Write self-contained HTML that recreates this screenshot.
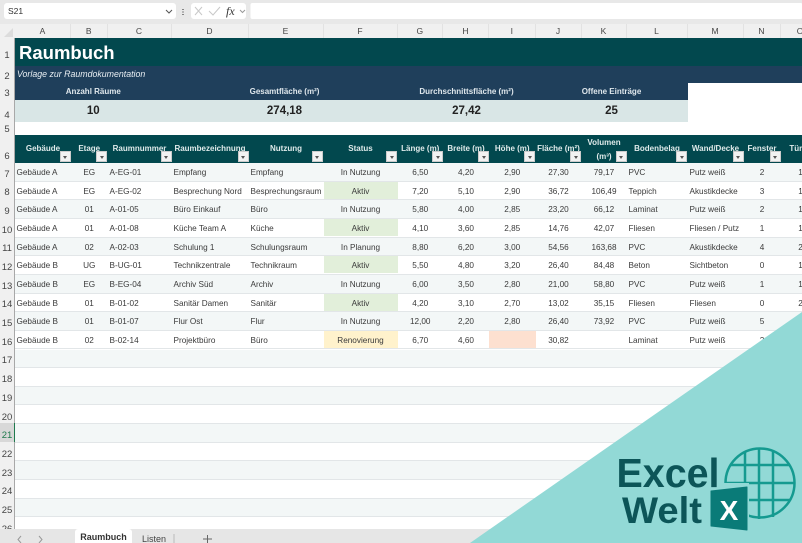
<!DOCTYPE html>
<html lang="de"><head><meta charset="utf-8"><title>Raumbuch</title>
<style>
*{box-sizing:border-box}
html,body{margin:0;padding:0;background:#fff}
#p{position:relative;width:802px;height:543px;overflow:hidden;background:#fff;font-family:"Liberation Sans",sans-serif;color:#333;filter:blur(.3px)}
.a{position:absolute}
.cl{position:absolute;top:24px;height:14px;line-height:15px;text-align:center;font-size:8.5px;color:#444;border-right:1px solid #e2e2e2}
.rn{position:absolute;left:0;width:14px;text-align:center;font-size:9.5px;color:#444;line-height:12px}
.r{position:absolute;left:15px;width:800px;height:18.65px;display:grid;grid-template-columns:56px 36.5px 64px 77px 75px 74px 45.5px 46px 46.5px 46px 45px 61px 56px 37px 40px;font-size:8.2px;line-height:19px;border-bottom:1.5px solid #e2e6e8;color:#3a3a3a;white-space:nowrap}
.r.o{background:#f3f7f7}
.r>div{overflow:visible;height:17.2px}
.l{padding-left:2px}.c{text-align:center}
.r>div:first-child{padding-left:1.5px}
.g{background:#e2efda}.y{background:#fff2cc}.p{background:#fde0d0}
.h{position:absolute;top:135px;height:28px;color:#dfeaea;font-size:8px;font-weight:bold;text-align:center;line-height:28px;white-space:nowrap}
.f{position:absolute;top:151px;width:11px;height:11px;background:#f2f2f2;border:1px solid #ccc}
.f:after{content:"";position:absolute;left:2.5px;top:3.5px;border:2.5px solid transparent;border-top:3px solid #555;border-bottom:0}
.k{position:absolute;top:83px;height:17px;line-height:18px;text-align:center;color:#dfe7ec;font-size:8px;font-weight:bold}
.v{position:absolute;top:100px;height:22px;line-height:23px;text-align:center;color:#222;font-size:11.5px;font-weight:bold}
</style></head><body><div id="p">

<!-- formula bar -->
<div class="a" style="left:0;top:0;width:802px;height:24px;background:#e8e8e8"></div>
<div class="a" style="left:4px;top:3px;width:172px;height:16px;background:#fff;border-radius:3px;font-size:8.5px;line-height:16px;padding-left:4px;color:#333">S21</div>
<svg class="a" style="left:0;top:0" width="802" height="24" fill="none">
<path d="M166 10l3 3 3-3" stroke="#555" stroke-width="1"/>
<path d="M183 9v1M183 11.500v1M183 14v1" stroke="#444" stroke-width="1.200"/>
<rect x="191" y="3" width="55" height="16" rx="3" fill="#fff"/>
<path d="M195 7l7 8M202 7l-7 8" stroke="#c8c8c8"/>
<path d="M209 11l4 4 7-8" stroke="#c8c8c8"/>
<path d="M240 10l2.500 2.500 2.500-2.500" stroke="#999"/>
<rect x="250.500" y="3" width="552" height="16" rx="2" fill="#fff"/>
</svg>
<div class="a" style="left:226px;top:3px;height:16px;line-height:16px;font-family:'Liberation Serif',serif;font-style:italic;font-size:12px;color:#333">fx</div>

<!-- column header -->
<div class="a" style="left:0;top:24px;width:802px;height:14px;background:#f0f0f0"></div>
<svg class="a" style="left:0;top:24px" width="15" height="14"><path d="M4 13h9V4z" fill="#dcdcdc"/></svg>
<div class="cl" style="left:15px;width:56px">A</div>
<div class="cl" style="left:71px;width:36.500px">B</div>
<div class="cl" style="left:107.500px;width:64px">C</div>
<div class="cl" style="left:171.500px;width:77px">D</div>
<div class="cl" style="left:248.500px;width:75px">E</div>
<div class="cl" style="left:323.500px;width:74px">F</div>
<div class="cl" style="left:397.500px;width:45.500px">G</div>
<div class="cl" style="left:443px;width:46px">H</div>
<div class="cl" style="left:489px;width:46.500px">I</div>
<div class="cl" style="left:535.500px;width:46px">J</div>
<div class="cl" style="left:581.500px;width:45px">K</div>
<div class="cl" style="left:626.500px;width:61px">L</div>
<div class="cl" style="left:687.500px;width:56px">M</div>
<div class="cl" style="left:743.500px;width:37px">N</div>
<div class="cl" style="left:780.500px;width:40px">O</div>

<!-- row header -->
<div class="a" style="left:0;top:38px;width:15px;height:491px;background:#f0f0f0;border-right:1px solid #a8a8a8"></div>
<div class="a" style="left:0;top:423px;width:14px;height:19px;background:#d8d8d8"></div>
<div class="a" style="left:13.500px;top:423px;width:1.500px;height:19px;background:#1f7a4d"></div>
<div class="rn" style="top:50px">1</div>
<div class="rn" style="top:71px">2</div>
<div class="rn" style="top:88px">3</div>
<div class="rn" style="top:110px">4</div>
<div class="rn" style="top:124px">5</div>
<div class="rn" style="top:151px">6</div>
<div class="rn" style="top:169px">7</div>
<div class="rn" style="top:187px">8</div>
<div class="rn" style="top:206px">9</div>
<div class="rn" style="top:225px">10</div>
<div class="rn" style="top:243px">11</div>
<div class="rn" style="top:262px">12</div>
<div class="rn" style="top:281px">13</div>
<div class="rn" style="top:299px">14</div>
<div class="rn" style="top:318px">15</div>
<div class="rn" style="top:337px">16</div>
<div class="rn" style="top:355px">17</div>
<div class="rn" style="top:374px">18</div>
<div class="rn" style="top:393px">19</div>
<div class="rn" style="top:412px">20</div>
<div class="rn" style="top:430px;color:#1f7a4d">21</div>
<div class="rn" style="top:449px">22</div>
<div class="rn" style="top:468px">23</div>
<div class="rn" style="top:486px">24</div>
<div class="rn" style="top:505px">25</div>
<div class="rn" style="top:524px">26</div>

<!-- title bands -->
<div class="a" style="left:15px;top:38px;width:787px;height:28px;background:#02484e;color:#fff;font-size:18.500px;font-weight:bold;line-height:29px;padding-left:4px">Raumbuch</div>
<div class="a" style="left:15px;top:66px;width:787px;height:17px;background:#1f3f5b;color:#e8eef2;font-size:8.800px;font-style:italic;line-height:16px;padding-left:2px">Vorlage zur Raumdokumentation</div>
<div class="a" style="left:15px;top:83px;width:672.500px;height:17px;background:#1f3f5b"></div>
<div class="a" style="left:15px;top:100px;width:672.500px;height:22px;background:#d9e6e6"></div>
<div class="a" style="left:15px;top:134.500px;width:787px;height:1px;background:#777"></div>
<div class="k" style="left:15px;width:156.500px">Anzahl Räume</div>
<div class="k" style="left:171.500px;width:226px">Gesamtfläche (m²)</div>
<div class="k" style="left:397.500px;width:138px">Durchschnittsfläche (m²)</div>
<div class="k" style="left:535.500px;width:152px">Offene Einträge</div>
<div class="v" style="left:15px;width:156.500px">10</div>
<div class="v" style="left:171.500px;width:226px">274,18</div>
<div class="v" style="left:397.500px;width:138px">27,42</div>
<div class="v" style="left:535.500px;width:152px">25</div>

<!-- table header -->
<div class="a" style="left:15px;top:135px;width:787px;height:28px;background:#02484e"></div>
<div class="h" style="left:15px;width:56px">Gebäude</div>
<div class="h" style="left:71px;width:36.500px">Etage</div>
<div class="h" style="left:107.500px;width:64px">Raumnummer</div>
<div class="h" style="left:171.500px;width:77px">Raumbezeichnung</div>
<div class="h" style="left:248.500px;width:75px">Nutzung</div>
<div class="h" style="left:323.500px;width:74px">Status</div>
<div class="h" style="left:397.500px;width:45.500px">Länge (m)</div>
<div class="h" style="left:443px;width:46px">Breite (m)</div>
<div class="h" style="left:489px;width:46.500px">Höhe (m)</div>
<div class="h" style="left:535.500px;width:46px">Fläche (m²)</div>
<div class="h" style="left:581.500px;width:45px;line-height:14px;padding-top:1px;white-space:normal">Volumen (m³)</div>
<div class="h" style="left:626.500px;width:61px">Bodenbelag</div>
<div class="h" style="left:687.500px;width:56px">Wand/Decke</div>
<div class="h" style="left:743.500px;width:37px">Fenster</div>
<div class="h" style="left:780.500px;width:40px">Türen</div>
<div class="f" style="left:59.500px"></div>
<div class="f" style="left:96px"></div>
<div class="f" style="left:160.500px"></div>
<div class="f" style="left:237.500px"></div>
<div class="f" style="left:311.500px"></div>
<div class="f" style="left:386px"></div>
<div class="f" style="left:432px"></div>
<div class="f" style="left:478px"></div>
<div class="f" style="left:524px"></div>
<div class="f" style="left:570px"></div>
<div class="f" style="left:615.500px"></div>
<div class="f" style="left:676px"></div>
<div class="f" style="left:732.500px"></div>
<div class="f" style="left:769.500px"></div>

<!-- data -->
<div class="r o" style="top:163px"><div class="l">Gebäude A</div><div class="c">EG</div><div class="l">A-EG-01</div><div class="l">Empfang</div><div class="l">Empfang</div><div class="c">In Nutzung</div><div class="c">6,50</div><div class="c">4,20</div><div class="c">2,90</div><div class="c">27,30</div><div class="c">79,17</div><div class="l">PVC</div><div class="l">Putz weiß</div><div class="c">2</div><div class="c">1</div></div>
<div class="r" style="top:181.650px"><div class="l">Gebäude A</div><div class="c">EG</div><div class="l">A-EG-02</div><div class="l">Besprechung Nord</div><div class="l">Besprechungsraum</div><div class="c g">Aktiv</div><div class="c">7,20</div><div class="c">5,10</div><div class="c">2,90</div><div class="c">36,72</div><div class="c">106,49</div><div class="l">Teppich</div><div class="l">Akustikdecke</div><div class="c">3</div><div class="c">1</div></div>
<div class="r o" style="top:200.300px"><div class="l">Gebäude A</div><div class="c">01</div><div class="l">A-01-05</div><div class="l">Büro Einkauf</div><div class="l">Büro</div><div class="c">In Nutzung</div><div class="c">5,80</div><div class="c">4,00</div><div class="c">2,85</div><div class="c">23,20</div><div class="c">66,12</div><div class="l">Laminat</div><div class="l">Putz weiß</div><div class="c">2</div><div class="c">1</div></div>
<div class="r" style="top:218.950px"><div class="l">Gebäude A</div><div class="c">01</div><div class="l">A-01-08</div><div class="l">Küche Team A</div><div class="l">Küche</div><div class="c g">Aktiv</div><div class="c">4,10</div><div class="c">3,60</div><div class="c">2,85</div><div class="c">14,76</div><div class="c">42,07</div><div class="l">Fliesen</div><div class="l">Fliesen / Putz</div><div class="c">1</div><div class="c">1</div></div>
<div class="r o" style="top:237.600px"><div class="l">Gebäude A</div><div class="c">02</div><div class="l">A-02-03</div><div class="l">Schulung 1</div><div class="l">Schulungsraum</div><div class="c">In Planung</div><div class="c">8,80</div><div class="c">6,20</div><div class="c">3,00</div><div class="c">54,56</div><div class="c">163,68</div><div class="l">PVC</div><div class="l">Akustikdecke</div><div class="c">4</div><div class="c">2</div></div>
<div class="r" style="top:256.250px"><div class="l">Gebäude B</div><div class="c">UG</div><div class="l">B-UG-01</div><div class="l">Technikzentrale</div><div class="l">Technikraum</div><div class="c g">Aktiv</div><div class="c">5,50</div><div class="c">4,80</div><div class="c">3,20</div><div class="c">26,40</div><div class="c">84,48</div><div class="l">Beton</div><div class="l">Sichtbeton</div><div class="c">0</div><div class="c">1</div></div>
<div class="r o" style="top:274.900px"><div class="l">Gebäude B</div><div class="c">EG</div><div class="l">B-EG-04</div><div class="l">Archiv Süd</div><div class="l">Archiv</div><div class="c">In Nutzung</div><div class="c">6,00</div><div class="c">3,50</div><div class="c">2,80</div><div class="c">21,00</div><div class="c">58,80</div><div class="l">PVC</div><div class="l">Putz weiß</div><div class="c">1</div><div class="c">1</div></div>
<div class="r" style="top:293.550px"><div class="l">Gebäude B</div><div class="c">01</div><div class="l">B-01-02</div><div class="l">Sanitär Damen</div><div class="l">Sanitär</div><div class="c g">Aktiv</div><div class="c">4,20</div><div class="c">3,10</div><div class="c">2,70</div><div class="c">13,02</div><div class="c">35,15</div><div class="l">Fliesen</div><div class="l">Fliesen</div><div class="c">0</div><div class="c">2</div></div>
<div class="r o" style="top:312.200px"><div class="l">Gebäude B</div><div class="c">01</div><div class="l">B-01-07</div><div class="l">Flur Ost</div><div class="l">Flur</div><div class="c">In Nutzung</div><div class="c">12,00</div><div class="c">2,20</div><div class="c">2,80</div><div class="c">26,40</div><div class="c">73,92</div><div class="l">PVC</div><div class="l">Putz weiß</div><div class="c">5</div><div class="c">1</div></div>
<div class="r" style="top:330.850px"><div class="l">Gebäude B</div><div class="c">02</div><div class="l">B-02-14</div><div class="l">Projektbüro</div><div class="l">Büro</div><div class="c y">Renovierung</div><div class="c">6,70</div><div class="c">4,60</div><div class="c p"></div><div class="c">30,82</div><div class="c"></div><div class="l">Laminat</div><div class="l">Putz weiß</div><div class="c">2</div><div class="c">1</div></div>

<!-- empty rows -->
<div class="r o" style="top:349.500px"></div>
<div class="r" style="top:368.150px"></div>
<div class="r o" style="top:386.800px"></div>
<div class="r" style="top:405.450px"></div>
<div class="r o" style="top:424.100px"></div>
<div class="r" style="top:442.750px"></div>
<div class="r o" style="top:461.400px"></div>
<div class="r" style="top:480.050px"></div>
<div class="r o" style="top:498.700px"></div>

<!-- tabs -->
<div class="a" style="left:0;top:529px;width:802px;height:14px;background:#e6e6e6"></div>
<svg class="a" style="left:0;top:529px" width="240" height="14" fill="none">
<path d="M21 7l-3 3.500 3 3.500M39 7l3 3.500-3 3.500" stroke="#999"/>
<path d="M203 10h9M207.500 6v8" stroke="#666"/>
<path d="M174 5v9" stroke="#bbb"/>
</svg>
<div class="a" style="left:75px;top:529px;width:57px;height:14px;background:#fff;border-radius:3px 3px 0 0;font-size:9px;font-weight:bold;line-height:17px;text-align:center;color:#333">Raumbuch</div>
<div class="a" style="left:134px;top:529px;width:40px;height:14px;font-size:9px;line-height:20px;text-align:center;color:#444">Listen</div>

<!-- overlay + logo -->
<svg class="a" style="left:0;top:0" width="802" height="543">
<polygon points="802,312 802,543 470,543" fill="#92d9d6"/>
<g fill="none" stroke="#159a90" stroke-width="2.500">
<circle cx="760" cy="483" r="34.500"/>
<path d="M745 452v62M759 449v70M773 451v66M731 465h58M725 483h70M730 500h60"/>
</g>
<rect x="707" y="483" width="42" height="50" fill="#92d9d6"/>
<rect x="719" y="487" width="6" height="0" fill="#92d9d6"/>
<text x="616.500" y="487" font-family="Liberation Sans" font-weight="bold" font-size="41" fill="#0c5558" textLength="103" lengthAdjust="spacingAndGlyphs">Excel</text>
<text x="622" y="523" font-family="Liberation Sans" font-weight="bold" font-size="37" fill="#0c5558" textLength="80" lengthAdjust="spacingAndGlyphs">Welt</text>
<polygon points="711,491 747,487 747,530 711,526" fill="#0a7b78" stroke="#0a7b78" stroke-linejoin="round"/>
<text x="729" y="520" text-anchor="middle" font-family="Liberation Sans" font-weight="bold" font-size="28" fill="#fff">X</text>
</svg>
</div></body></html>
